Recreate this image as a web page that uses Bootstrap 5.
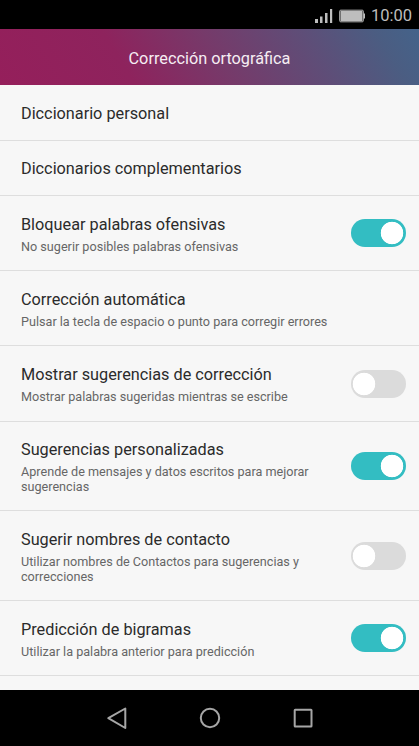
<!DOCTYPE html>
<html lang="es">
<head>
<meta charset="utf-8">
<meta name="viewport" content="width=device-width, initial-scale=1">
<title>Corrección ortográfica</title>
<link href="https://cdn.jsdelivr.net/npm/bootstrap@5.3.0/dist/css/bootstrap.min.css" rel="stylesheet">
<style>
body { font-family: Roboto, sans-serif; background: #f7f7f7; height: 746px; }
.status-bar { height: 29px; color: #bdbdbd; font-size: 16.5px; line-height: 1; padding: 2px 7px 0 0; }
.status-bar .clock { padding-top: 2px; }
.app-header { height: 56px; background: linear-gradient(58deg, #951f5b 0%, #8e235d 30%, #763a6a 52%, #5e4e78 74%, #4b5d82 90%, #44638a 100%); color: #f6edf3; }
.app-header h1 { font-size: 16.3px; line-height: 20px; padding-top: 3px; }
.settings { height: 605px; }
.settings .setting { background: #f7f7f7; border: 0; border-bottom: 1px solid #dedede; padding: 0 13px 0 21px; height: 75px; flex-shrink: 0; }
.settings .one-line { height: 55px; }
.settings .first-row { height: 56px; }
.settings .mid-row { height: 76px; }
.settings .tall { height: 89px; }
.settings .taller { height: 90px; }
.setting-title { font-size: 16.25px; line-height: 20px; color: #2b2b2b; }
.setting-note { font-size: 12.63px; line-height: 15px; color: #666; margin-top: 4px; }
.setting-text { width: 317px; padding-top: 19px; }
.one-line .setting-text, .tall .setting-text { padding-top: 18px; }
.settings .form-check-input { width: 55px; height: 28px; margin: 0; border: 0; background-color: #dbdbdb; box-shadow: none; }
.settings .form-switch .form-check-input { background-image: radial-gradient(circle, #fff 10.9px, transparent 11.6px); background-size: 28px 28px; background-position: -1px center; }
.settings .form-switch .form-check-input:checked { background-color: #33bdc2; background-position: 27px center; }
.nav-keys { height: 56px; }
</style>
</head>
<body class="d-flex flex-column overflow-hidden">
<div class="status-bar bg-black d-flex justify-content-end align-items-center flex-shrink-0">
  <svg width="56" height="18" viewBox="0 0 56 18" fill="#bdbdbd" aria-hidden="true">
    <path d="M0 12h3v4H0zM5 9.500h2.500V16H5zM10 6h2.500v10H10zM15 2h2.200v14H15z"/>
    <rect x="24.700" y="3.200" width="23.600" height="11.600" rx="1" fill="none" stroke="#bdbdbd"/>
    <rect x="25.500" y="4" width="22" height="10"/>
    <path d="M48.500 6.500H50v5h-1.500z"/>
  </svg>
  <span class="clock">10:00</span>
</div>
<header class="app-header d-flex align-items-center justify-content-center flex-shrink-0">
  <h1 class="m-0 fw-normal">Corrección ortográfica</h1>
</header>
<main class="settings list-group rounded-0 overflow-hidden flex-shrink-0">
  <div class="setting first-row list-group-item d-flex"><div class="setting-text"><div class="setting-title">Diccionario personal</div></div></div>
  <div class="setting one-line list-group-item d-flex"><div class="setting-text"><div class="setting-title">Diccionarios complementarios</div></div></div>
  <label class="setting list-group-item d-flex justify-content-between">
    <span class="setting-text"><span class="setting-title d-block">Bloquear palabras ofensivas</span><span class="setting-note d-block">No sugerir posibles palabras ofensivas</span></span>
    <span class="form-switch p-0 m-0 d-flex align-items-center"><input class="form-check-input" type="checkbox" role="switch" checked></span>
  </label>
  <div class="setting list-group-item d-flex"><div class="setting-text"><div class="setting-title">Corrección automática</div><div class="setting-note">Pulsar la tecla de espacio o punto para corregir errores</div></div></div>
  <label class="setting mid-row list-group-item d-flex justify-content-between">
    <span class="setting-text"><span class="setting-title d-block">Mostrar sugerencias de corrección</span><span class="setting-note d-block">Mostrar palabras sugeridas mientras se escribe</span></span>
    <span class="form-switch p-0 m-0 d-flex align-items-center"><input class="form-check-input" type="checkbox" role="switch"></span>
  </label>
  <label class="setting tall list-group-item d-flex justify-content-between">
    <span class="setting-text"><span class="setting-title d-block">Sugerencias personalizadas</span><span class="setting-note d-block">Aprende de mensajes y datos escritos para mejorar<br>sugerencias</span></span>
    <span class="form-switch p-0 m-0 d-flex align-items-center"><input class="form-check-input" type="checkbox" role="switch" checked></span>
  </label>
  <label class="setting taller list-group-item d-flex justify-content-between">
    <span class="setting-text"><span class="setting-title d-block">Sugerir nombres de contacto</span><span class="setting-note d-block">Utilizar nombres de Contactos para sugerencias y<br>correcciones</span></span>
    <span class="form-switch p-0 m-0 d-flex align-items-center"><input class="form-check-input" type="checkbox" role="switch"></span>
  </label>
  <label class="setting list-group-item d-flex justify-content-between">
    <span class="setting-text"><span class="setting-title d-block">Predicción de bigramas</span><span class="setting-note d-block">Utilizar la palabra anterior para predicción</span></span>
    <span class="form-switch p-0 m-0 d-flex align-items-center"><input class="form-check-input" type="checkbox" role="switch" checked></span>
  </label>
</main>
<nav class="nav-keys bg-black flex-shrink-0" aria-label="Navegación">
  <svg class="d-block" width="419" height="56" viewBox="0 0 419 56" fill="none" stroke="#a6a6a6" stroke-width="2" stroke-linejoin="round">
    <path d="M125.300 18.500v19.500L108.300 28.200z"/>
    <circle cx="210" cy="28" r="9.200"/>
    <rect x="294.700" y="19.700" width="16.800" height="16.800" rx=".5"/>
  </svg>
</nav>
<script src="https://cdn.jsdelivr.net/npm/bootstrap@5.3.0/dist/js/bootstrap.bundle.min.js"></script>
</body>
</html>
